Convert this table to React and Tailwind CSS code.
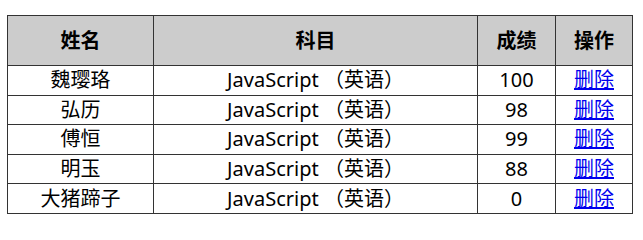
import React from "react";

const rows = [
  ["魏璎珞", "JavaScript （英语）", "100"],
  ["弘历", "JavaScript （英语）", "98"],
  ["傅恒", "JavaScript （英语）", "99"],
  ["明玉", "JavaScript （英语）", "88"],
  ["大猪蹄子", "JavaScript （英语）", "0"],
];

export default function App() {
  return (
    <div
      className="pt-[15px] pl-[7px] bg-white min-h-[240px]"
      style={{ fontFamily: '"Noto Sans", "Noto Sans CJK SC", sans-serif' }}
    >
      <table className="w-[625px] border-collapse border border-[#333] text-[20px] text-black text-center table-fixed">
        <colgroup>
          <col className="w-[146px]" />
          <col className="w-[324px]" />
          <col className="w-[78px]" />
          <col className="w-[77px]" />
        </colgroup>
        <thead>
          <tr className="bg-[#cccccc] h-[50px]">
            <th className="border border-[#333] font-bold p-0">姓名</th>
            <th className="border border-[#333] font-bold p-0">科目</th>
            <th className="border border-[#333] font-bold p-0">成绩</th>
            <th className="border border-[#333] font-bold p-0">操作</th>
          </tr>
        </thead>
        <tbody>
          {rows.map((r, i) => (
            <tr key={i} className="h-[29.6px]">
              <td className="border border-[#333] p-0 leading-[26px]">{r[0]}</td>
              <td className="border border-[#333] p-0 leading-[26px]">{r[1]}</td>
              <td className="border border-[#333] p-0 leading-[26px]">{r[2]}</td>
              <td className="border border-[#333] p-0 leading-[26px]">
                <a href="#" className="text-[#0000ee] underline">删除</a>
              </td>
            </tr>
          ))}
        </tbody>
      </table>
    </div>
  );
}
